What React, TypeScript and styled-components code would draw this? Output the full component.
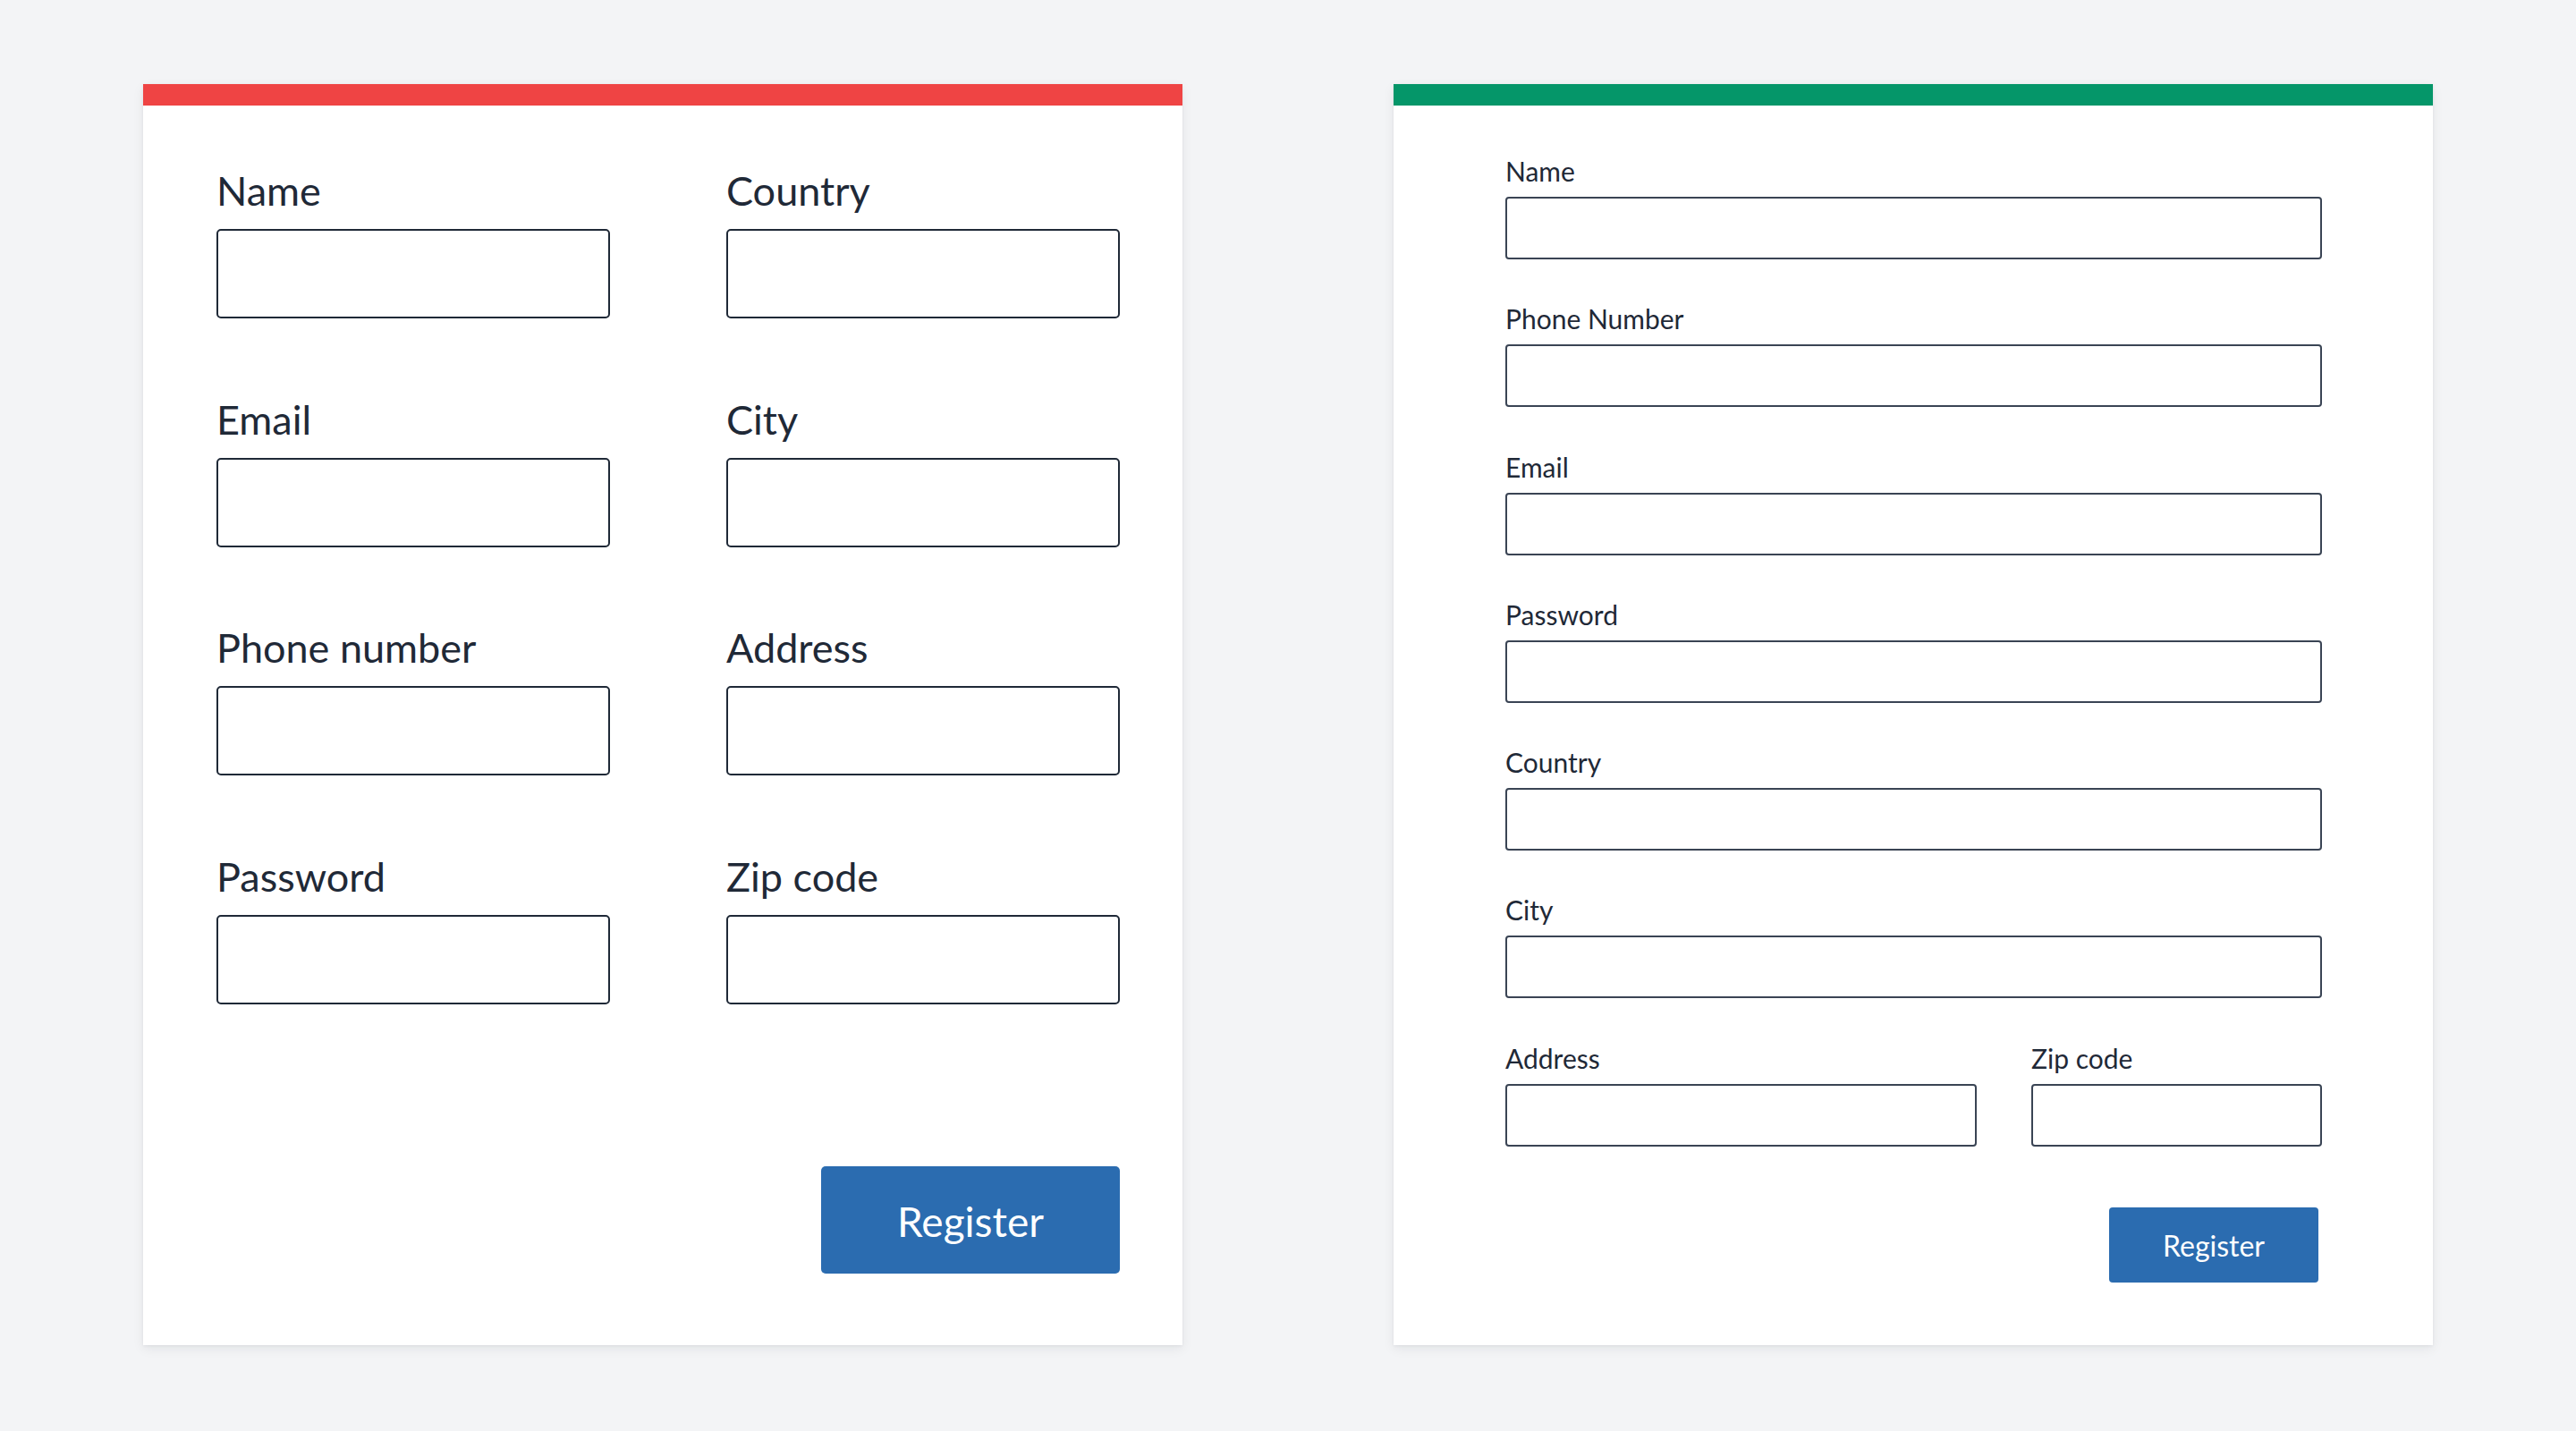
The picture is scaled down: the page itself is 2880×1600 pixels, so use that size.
import React from "react";
import styled, { createGlobalStyle } from "styled-components";

const GlobalStyle = createGlobalStyle`
  html, body {
    margin: 0;
    padding: 0;
    background: #f3f4f6;
    font-family: Lato, "Open Sans", sans-serif;
    color: #1f2937;
  }
  * { box-sizing: border-box; }
`;

const Page = styled.main`
  width: 2880px;
  height: 1600px;
  display: flex;
  justify-content: center;
  align-items: flex-start;
  gap: 236px;
  padding-top: 94px;
`;

const Card = styled.section<{ $accent: string }>`
  width: 1162px;
  height: 1410px;
  background: #ffffff;
  border-top: 24px solid ${(p) => p.$accent};
  box-shadow: 0 4px 12px rgba(15, 23, 42, 0.07), 0 1px 3px rgba(15, 23, 42, 0.06);
  display: flex;
  flex-direction: column;
`;

const LargeCard = styled(Card)`
  padding: 66px 70px 0 82px;
`;

const CompactCard = styled(Card)`
  padding: 54px 124px 0 125px;
`;

const TwoColumnGrid = styled.div`
  display: grid;
  grid-template-columns: 440px 440px;
  column-gap: 130px;
  row-gap: 83.5px;
`;

const Stack = styled.div`
  display: flex;
  flex-direction: column;
  gap: 47.3px;
`;

const SplitRow = styled.div`
  display: grid;
  grid-template-columns: 527px 325px;
  column-gap: 61px;
`;

const Field = styled.label`
  display: flex;
  flex-direction: column;
`;

const LabelText = styled.span<{ $size: "lg" | "sm" }>`
  font-family: Lato, "Open Sans", sans-serif;
  font-size: ${(p) => (p.$size === "lg" ? "45px" : "30px")};
  line-height: ${(p) => (p.$size === "lg" ? "54px" : "36px")};
  padding-top: ${(p) => (p.$size === "lg" ? "2px" : "1px")};
  margin-bottom: ${(p) => (p.$size === "lg" ? "16px" : "11px")};
  color: #1f2937;
  font-weight: 400;
`;

const Input = styled.input<{ $size: "lg" | "sm" }>`
  width: 100%;
  height: ${(p) => (p.$size === "lg" ? "100px" : "70px")};
  border: 2px solid ${(p) => (p.$size === "lg" ? "#1f2937" : "#3a4454")};
  border-radius: ${(p) => (p.$size === "lg" ? "5px" : "4px")};
  background: #ffffff;
  outline: none;
  padding: 0 16px;
  font-family: Lato, sans-serif;
  font-size: 28px;
`;

const Actions = styled.div<{ $top: number; $right: number }>`
  display: flex;
  justify-content: flex-end;
  margin-top: ${(p) => p.$top}px;
  padding-right: ${(p) => p.$right}px;
`;

const Button = styled.button<{ $size: "lg" | "sm" }>`
  width: ${(p) => (p.$size === "lg" ? "334px" : "234px")};
  height: ${(p) => (p.$size === "lg" ? "120px" : "84px")};
  padding-top: ${(p) => (p.$size === "lg" ? "5px" : "3px")};
  background: #2b6cb0;
  color: #ffffff;
  border: none;
  border-radius: ${(p) => (p.$size === "lg" ? "5px" : "4px")};
  font-family: Lato, "Open Sans", sans-serif;
  font-size: ${(p) => (p.$size === "lg" ? "46px" : "32px")};
  font-weight: 400;
  cursor: pointer;
`;

type Size = "lg" | "sm";

const FormField = ({ label, size }: { label: string; size: Size }) => (
  <Field>
    <LabelText $size={size}>{label}</LabelText>
    <Input $size={size} type="text" />
  </Field>
);

const leftFields = [
  "Name",
  "Country",
  "Email",
  "City",
  "Phone number",
  "Address",
  "Password",
  "Zip code",
];

const rightFields = ["Name", "Phone Number", "Email", "Password", "Country", "City"];

export default function App() {
  return (
    <>
      <GlobalStyle />
      <Page>
        <LargeCard $accent="#ef4444">
          <TwoColumnGrid>
            {leftFields.map((f) => (
              <FormField key={f} label={f} size="lg" />
            ))}
          </TwoColumnGrid>
          <Actions $top={181} $right={0}>
            <Button $size="lg">Register</Button>
          </Actions>
        </LargeCard>
        <CompactCard $accent="#059669">
          <Stack>
            {rightFields.map((f) => (
              <FormField key={f} label={f} size="sm" />
            ))}
            <SplitRow>
              <FormField label="Address" size="sm" />
              <FormField label="Zip code" size="sm" />
            </SplitRow>
          </Stack>
          <Actions $top={68} $right={4}>
            <Button $size="sm">Register</Button>
          </Actions>
        </CompactCard>
      </Page>
    </>
  );
}
